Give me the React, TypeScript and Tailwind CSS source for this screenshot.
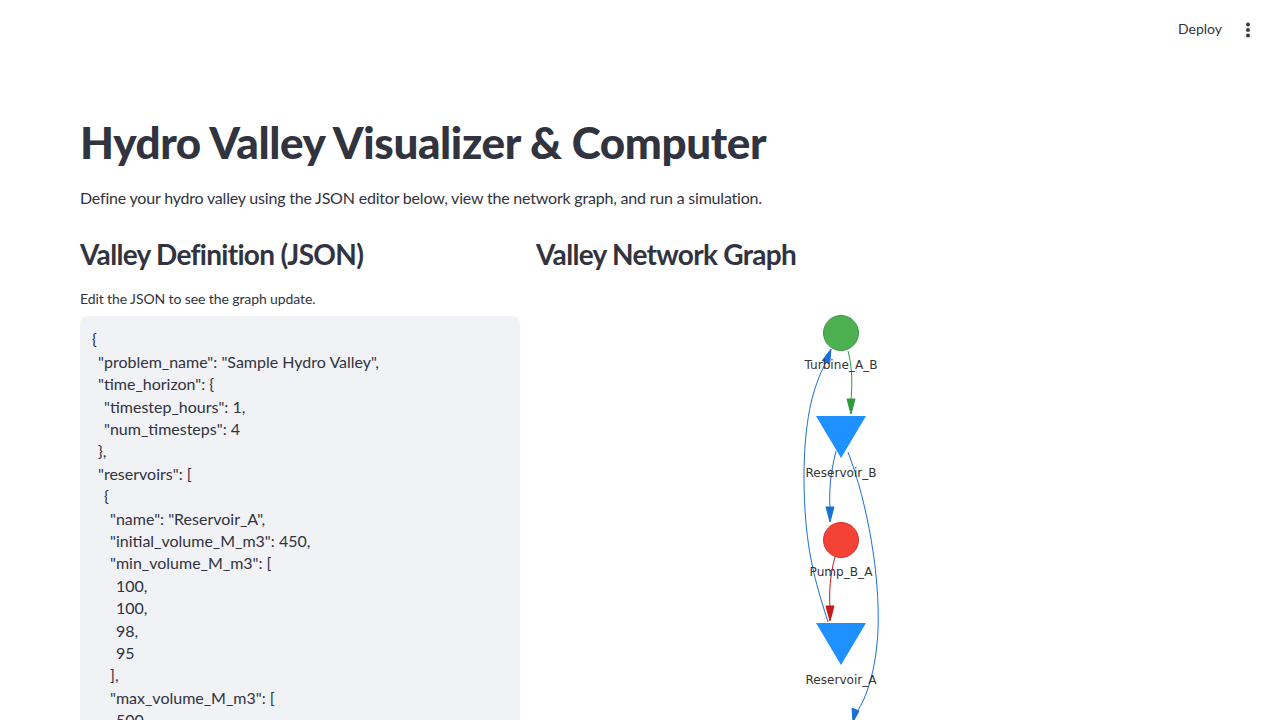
import React from "react";

const jsonLines: [number, string][] = [
  [0, "{"],
  [1, "\"problem_name\": \"Sample Hydro Valley\","],
  [1, "\"time_horizon\": {"],
  [2, "\"timestep_hours\": 1,"],
  [2, "\"num_timesteps\": 4"],
  [1, "},"],
  [1, "\"reservoirs\": ["],
  [2, "{"],
  [3, "\"name\": \"Reservoir_A\","],
  [3, "\"initial_volume_M_m3\": 450,"],
  [3, "\"min_volume_M_m3\": ["],
  [4, "100,"],
  [4, "100,"],
  [4, "98,"],
  [4, "95"],
  [3, "],"],
  [3, "\"max_volume_M_m3\": ["],
  [4, "500,"],
  [4, "500,"],
];

function Graph() {
  const lbl = "#333333";
  return (
    <svg width="664" height="420" viewBox="536 300 664 420" className="block">
      <path d="M848,351 C853,370 852,388 851,400" fill="none" stroke="#2e9a3a" strokeWidth="1" />
      <polygon points="847,399 855,399 851,414" fill="#2e9a3a" stroke="#2e9a3a" />
      <path d="M836,451 C830,475 829,493 830,508" fill="none" stroke="#1a6fd6" strokeWidth="1" />
      <polygon points="826,507 834,507 830,522" fill="#1a6fd6" stroke="#1a6fd6" />
      <path d="M835,557 C830,575 829,593 830,607" fill="none" stroke="#c41a1a" strokeWidth="1" />
      <polygon points="826,606 834,606 830,621" fill="#c41a1a" stroke="#c41a1a" />
      <path d="M828,622 C818,590 808,560 805,510 C802,460 806,420 813,395 C818,378 822,370 826,362" fill="none" stroke="#1a6fd6" strokeWidth="1" />
      <polygon points="831,349 829.7,363.4 822.3,360.6" fill="#1a6fd6" stroke="#1a6fd6" />
      <path d="M848,452 C868,505 880,575 878,630 C876,672 866,698 857,712" fill="none" stroke="#1a6fd6" strokeWidth="1" />
      <polygon points="853,722 852,708 859,711" fill="#1a6fd6" stroke="#1a6fd6" />
      <circle cx="841" cy="333" r="17.5" fill="#4caf50" stroke="#3d9a41" strokeWidth="1" />
      <polygon points="816,416 866,416 841,458" fill="#1e90ff" />
      <circle cx="841" cy="540" r="17.5" fill="#f44336" stroke="#d32f2f" strokeWidth="1" />
      <polygon points="816,623 866,623 841,665" fill="#1e90ff" />
      <g fontFamily="'DejaVu Sans', sans-serif" fontSize="12.1" fill={lbl} textAnchor="middle">
        <text x="841" y="368.5">Turbine_A_B</text>
        <text x="841" y="476.5">Reservoir_B</text>
        <text x="841" y="575.5">Pump_B_A</text>
        <text x="841" y="683.5">Reservoir_A</text>
      </g>
    </svg>
  );
}

export default function App() {
  return (
    <div
      className="w-[1280px] h-[720px] overflow-hidden bg-white text-[#31333f]"
      style={{ fontFamily: "Lato, 'Noto Sans', sans-serif" }}
    >
      <header className="h-[60px] flex items-center justify-end pr-[24px]">
        <span className="text-[14px] mr-[18px] mb-[3px]">Deploy</span>
        <svg width="16" height="20" viewBox="0 0 16 20">
          <circle cx="8" cy="4.5" r="1.9" fill="#31333f" />
          <circle cx="8" cy="10" r="1.9" fill="#31333f" />
          <circle cx="8" cy="15.5" r="1.9" fill="#31333f" />
        </svg>
      </header>
      <main className="px-20">
        <h1 className="mt-[56px] text-[44px] leading-[1.2] font-black tracking-[-0.4px]">
          Hydro Valley Visualizer &amp; Computer
        </h1>
        <p className="mt-[16px] text-[16px] leading-[1.6] tracking-[-0.2px]">
          Define your hydro valley using the JSON editor below, view the network graph, and run a simulation.
        </p>
        <div className="mt-[28px] grid grid-cols-[440px_664px] gap-4">
          <div>
            <h3 className="text-[28px] leading-[1.2] font-bold tracking-[-0.7px]">Valley Definition (JSON)</h3>
            <p className="mt-[16px] text-[14px] leading-[1.6] tracking-[-0.1px]">Edit the JSON to see the graph update.</p>
            <div className="mt-[6px] bg-[#f0f2f6] rounded-lg pt-[12px] pl-[12px] h-[420px]">
              {jsonLines.map(([ind, t], i) => (
                <div
                  key={i}
                  className="text-[16px] leading-[22.4px] whitespace-pre"
                  style={{ paddingLeft: ind * 6 }}
                >
                  {t}
                </div>
              ))}
            </div>
          </div>
          <div>
            <h3 className="text-[28px] leading-[1.2] font-bold tracking-[-0.7px]">Valley Network Graph</h3>
            <div className="mt-[28px]">
              <Graph />
            </div>
          </div>
        </div>
      </main>
    </div>
  );
}
